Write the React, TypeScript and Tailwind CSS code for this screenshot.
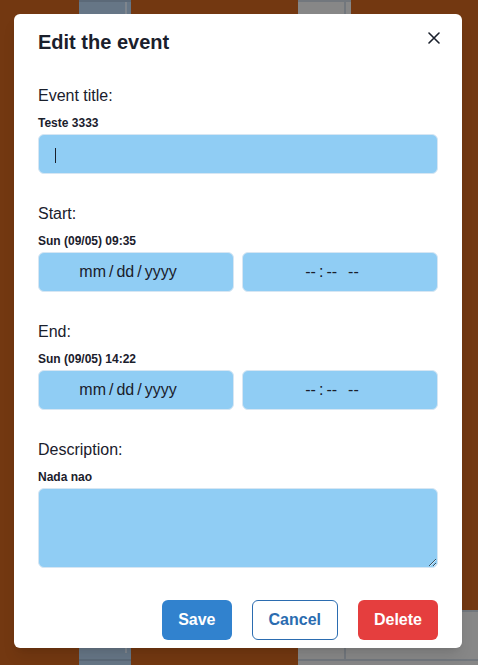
import React from "react";

const font = { fontFamily: '"Liberation Sans", Arial, sans-serif' };

type FieldProps = {
  label: string;
  hint: string;
  children: React.ReactNode;
  className?: string;
};

function Field({ label, hint, children, className }: FieldProps) {
  return (
    <div className={className}>
      <p className="text-base leading-6 text-[#1a202c]">{label}</p>
      <p className="mt-[7px] text-xs font-bold leading-4 text-[#1a202c]">{hint}</p>
      <div className="mt-[3px]">{children}</div>
    </div>
  );
}

function InputBox({ children }: { children: React.ReactNode }) {
  return (
    <div className="flex h-10 items-center justify-center rounded-md border border-[#d6e6f3] bg-[#90cdf4] pr-4 text-base text-[#1a202c]">
      {children}
    </div>
  );
}

function DateRow() {
  return (
    <div className="grid grid-cols-2 gap-2">
      <InputBox>
        <span className="flex gap-[3px]">
          <span>mm</span>
          <span>/</span>
          <span>dd</span>
          <span>/</span>
          <span>yyyy</span>
        </span>
      </InputBox>
      <InputBox>
        <span className="flex">
          <span>--</span>
          <span className="mx-[3px]">:</span>
          <span>--</span>
          <span className="ml-[11px]">--</span>
        </span>
      </InputBox>
    </div>
  );
}

function Backdrop() {
  return (
    <div className="flex h-[665px] w-full bg-[#733811]">
      <div className="w-[79px] shrink-0" />
      <div className="flex w-[52px] shrink-0 flex-col bg-[#667686]">
        <div className="flex flex-1 border-t-2 border-[#5b6978]">
          <div className="w-[46px]" />
          <div className="w-[2px] bg-[#7e858d]" />
        </div>
        <div className="h-[6px]" />
        <div className="h-[2px] bg-[#5b6978]" />
        <div className="h-[4px]" />
      </div>
      <div className="w-[167px] shrink-0" />
      <div className="flex flex-1 flex-col">
        <div className="flex flex-1">
          <div className="flex w-[53px] border-t-2 border-[#72777d] bg-[#878787]">
            <div className="w-[46px]" />
            <div className="w-[2px] bg-[#72777d]" />
          </div>
        </div>
        <div className="flex h-[55px] flex-col border-t-2 border-[#72777d] bg-[#878787]">
          <div className="flex flex-1">
            <div className="w-[46px]" />
            <div className="w-[2px] bg-[#72777d]" />
          </div>
          <div className="h-[2px] bg-[#72777d]" />
          <div className="h-[4px]" />
        </div>
      </div>
    </div>
  );
}

export default function App() {
  return (
    <div className="relative h-[665px] w-[478px] overflow-hidden" style={font}>
      <Backdrop />

      <section className="absolute left-[14px] top-[14px] flex w-[448px] flex-col rounded-md bg-white shadow-lg">
        <header className="px-6 py-4">
          <h2 className="text-xl font-bold leading-6 text-[#1a202c]">Edit the event</h2>
        </header>
        <button
          type="button"
          aria-label="Close"
          className="absolute right-3 top-2 flex size-8 items-center justify-center rounded-md text-[#1a202c]"
        >
          <svg width="12" height="12" viewBox="0 0 12 12" fill="none">
            <path d="M1 1L11 11M11 1L1 11" stroke="currentColor" strokeWidth="1.6" strokeLinecap="round" />
          </svg>
        </button>

        <div className="px-6 pt-[14px]">
          <Field label="Event title:" hint="Teste 3333">
            <div className="relative">
              <input
                type="text"
                className="h-10 w-full rounded-md border border-[#d6e6f3] bg-[#90cdf4] px-4 text-base text-[#1a202c] outline-none"
              />
              <span className="absolute left-[17px] top-[14px] h-[15px] w-px bg-[#1a202c]" aria-hidden="true" />
            </div>
          </Field>

          <Field label="Start:" hint="Sun (09/05) 09:35" className="mt-7">
            <DateRow />
          </Field>

          <Field label="End:" hint="Sun (09/05) 14:22" className="mt-7">
            <DateRow />
          </Field>

          <Field label="Description:" hint="Nada nao" className="mt-7">
            <textarea className="block h-20 w-full rounded-md border border-[#d6e6f3] bg-[#90cdf4] px-4 py-2 text-base outline-none" />
          </Field>
        </div>

        <footer className="flex justify-end gap-5 px-6 pt-8 pb-2">
          <button type="button" className="h-10 rounded-md bg-[#3182ce] px-4 text-base font-bold text-white">
            Save
          </button>
          <button
            type="button"
            className="h-10 rounded-md border border-[#2b6cb0] bg-white px-4 text-base font-bold text-[#2b6cb0]"
          >
            Cancel
          </button>
          <button type="button" className="h-10 rounded-md bg-[#e53e3e] px-4 text-base font-bold text-white">
            Delete
          </button>
        </footer>
      </section>
    </div>
  );
}
